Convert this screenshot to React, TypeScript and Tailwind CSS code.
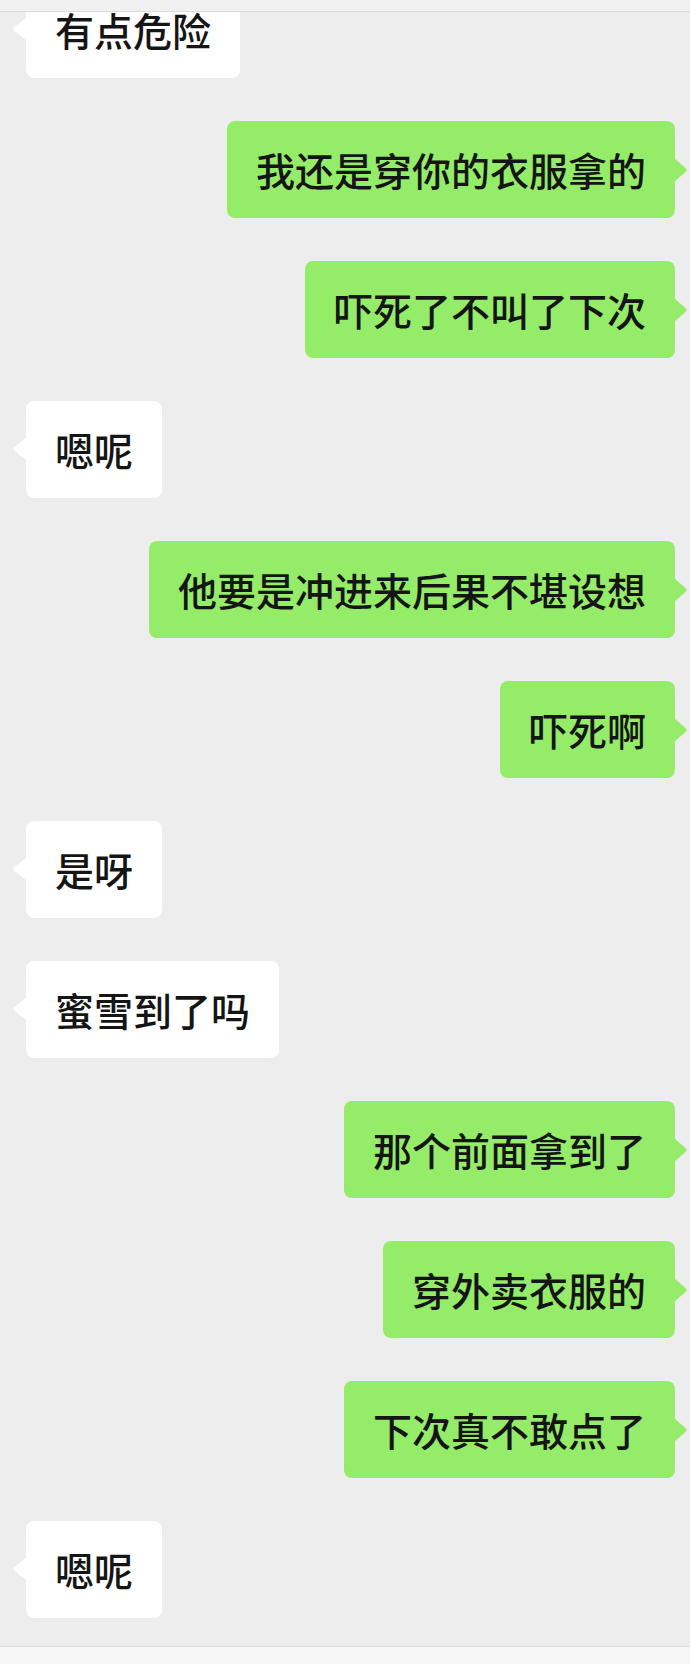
import React from "react";

type Msg = { side: "l" | "r"; text: string };

const msgs: Msg[] = [
  { side: "l", text: "有点危险" },
  { side: "r", text: "我还是穿你的衣服拿的" },
  { side: "r", text: "吓死了不叫了下次" },
  { side: "l", text: "嗯呢" },
  { side: "r", text: "他要是冲进来后果不堪设想" },
  { side: "r", text: "吓死啊" },
  { side: "l", text: "是呀" },
  { side: "l", text: "蜜雪到了吗" },
  { side: "r", text: "那个前面拿到了" },
  { side: "r", text: "穿外卖衣服的" },
  { side: "r", text: "下次真不敢点了" },
  { side: "l", text: "嗯呢" },
];

function Bubble({ m }: { m: Msg }) {
  const left = m.side === "l";
  return (
    <div className={left ? "flex justify-start pl-[26px]" : "flex justify-end pr-[15px]"}>
      <div
        className={
          "relative h-[97px] px-[29px] flex items-center rounded-[8px] text-[39px] leading-none font-medium text-[#151515] whitespace-nowrap " +
          (left ? "bg-white" : "bg-[#95ec69]")
        }
        style={{ fontFamily: '"Noto Sans CJK SC", "Noto Sans", sans-serif' }}
      >
        {left ? (
          <svg
            className="absolute left-[-14px] top-[36px]"
            width="15"
            height="24"
            viewBox="0 0 15 24"
          >
            <path d="M15 0 L2 10.5 Q0.5 12 2 13.5 L15 24 Z" fill="#ffffff" />
          </svg>
        ) : (
          <svg
            className="absolute right-[-13px] top-[37px]"
            width="14"
            height="24"
            viewBox="0 0 14 24"
          >
            <path d="M0 0 L12 10.5 Q13.5 12 12 13.5 L0 24 Z" fill="#95ec69" />
          </svg>
        )}
        <span>{m.text}</span>
      </div>
    </div>
  );
}

export default function App() {
  return (
    <div className="w-[690px] h-[1664px] bg-[#ededed] flex flex-col overflow-hidden">
      <div className="h-[12px] shrink-0 bg-[#f1f1f1] border-b border-[#dadada] relative z-10" />
      <div className="flex-1 overflow-hidden">
        <div className="flex flex-col gap-[43px] mt-[-31px]">
          {msgs.map((m, i) => (
            <Bubble key={i} m={m} />
          ))}
        </div>
      </div>
      <div className="h-[18px] shrink-0 bg-[#f7f7f7] border-t border-[#dddddd]" />
    </div>
  );
}
